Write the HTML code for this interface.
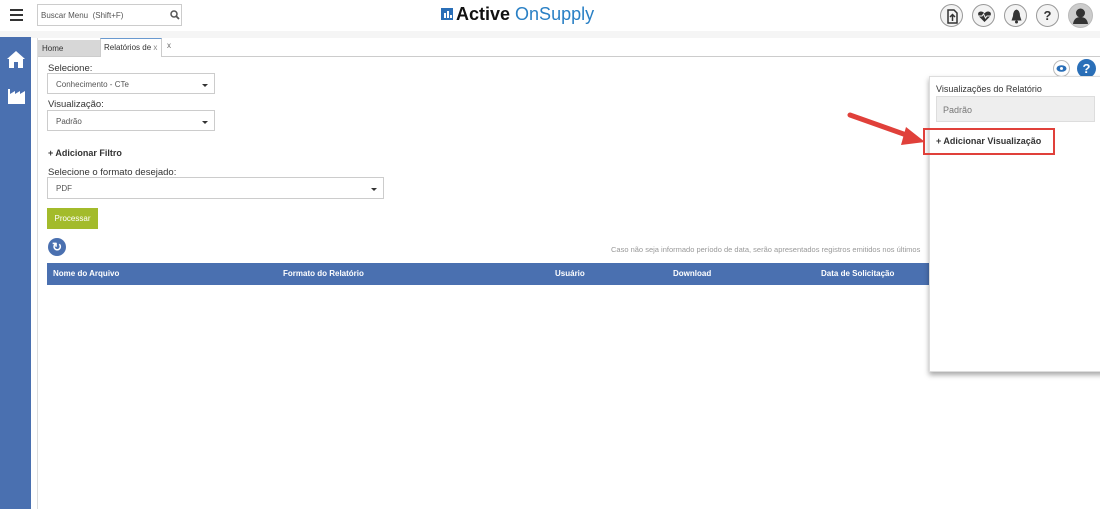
<!DOCTYPE html><html><head><style>
body{margin:0;width:1100px;height:509px;overflow:hidden;background:#fff;font-family:"Liberation Sans",sans-serif;position:relative;font-size:10px;color:#333}
.a{position:absolute}
.sel{position:absolute;border:1px solid #ccc;background:#fff;font-size:8px;color:#555;box-sizing:border-box;padding:6px 8px}
.sel:after{content:"";position:absolute;right:6px;top:10px;border:3px solid transparent;border-top:3px solid #333}
.lbl{position:absolute;font-size:9.5px;color:#333}
.circ{position:absolute;width:23px;height:23px;border-radius:50%;border:1px solid #999;background:#f3f3f3;box-sizing:border-box;font-weight:bold;font-size:13px;text-align:center;line-height:21px;color:#333}
.circ svg{position:absolute;left:0;top:0}
</style></head><body>
<div class="a" style="left:0;top:31px;width:1100px;height:7px;background:#f5f5f5"></div>
<div class="a" style="left:10px;top:9px;width:13px;height:2px;background:#333;box-shadow:0 5px 0 #333,0 10px 0 #333"></div>
<div class="a" style="left:37px;top:4px;width:145px;height:22px;border:1px solid #ccc;box-sizing:border-box;font-size:8px;padding:6px 3px;color:#555">Buscar Menu&nbsp; (Shift+F)</div>
<svg class="a" style="left:170px;top:10px" width="10" height="10"><circle cx="4" cy="4" r="3" fill="none" stroke="#555" stroke-width="1.5"/><line x1="6" y1="6" x2="9" y2="9" stroke="#555" stroke-width="1.8"/></svg>
<div class="a" style="left:441px;top:8px;width:12px;height:12px;background:#2a6fb8"></div>
<div class="a" style="left:444px;top:13px;width:1.5px;height:5px;background:#fff"></div><div class="a" style="left:447px;top:11px;width:1.5px;height:7px;background:#fff"></div><div class="a" style="left:450px;top:15px;width:1.5px;height:3px;background:#fff"></div>
<div class="a" style="left:456px;top:4px;font-size:18px;white-space:nowrap"><b style="color:#111">Active</b> <span style="color:#2a80c5">OnSupply</span></div>
<div class="circ" style="left:940px;top:4px"><svg width="23" height="23"><path d="M7 5h6l3 3v10H7Z" fill="none" stroke="#333" stroke-width="1.5"/><path d="M11.5 16v-6M9 12l2.5-2.5L14 12" fill="none" stroke="#333" stroke-width="1.5"/></svg></div>
<div class="circ" style="left:972px;top:4px"><svg width="23" height="23"><path d="M11.5 17 L5.5 11 Q4 7 7.5 6.5 Q10 6.3 11.5 8.5 Q13 6.3 15.5 6.5 Q19 7 17.5 11Z" fill="#333"/><path d="M5 11h4l1.5-2 2 4 1.5-2h4" fill="none" stroke="#f3f3f3" stroke-width="1"/></svg></div>
<div class="circ" style="left:1004px;top:4px"><svg width="23" height="23"><path d="M11.5 4.5 Q8 5.5 8 11 L6.5 15.5 H16.5 L15 11 Q15 5.5 11.5 4.5Z" fill="#333"/><circle cx="11.5" cy="17" r="1.5" fill="#333"/></svg></div>
<div class="circ" style="left:1036px;top:4px">?</div>
<div class="circ" style="left:1068px;top:3px;width:25px;height:25px;background:#ccc;border-color:#bbb"><svg width="23" height="23"><circle cx="11.5" cy="9" r="4.5" fill="#333"/><path d="M4 20 Q5 13 11.5 13 Q18 13 19 20Z" fill="#333"/></svg></div>
<div class="a" style="left:0;top:37px;width:31px;height:472px;background:#4a70b0"></div>
<svg class="a" style="left:6px;top:49px" width="20" height="20"><path d="M1 10 L10 2 L19 10 L17 10 L17 19 L3 19 L3 10Z" fill="#fff"/><rect x="8" y="13" width="4" height="6" fill="#4a70b0"/></svg>
<svg class="a" style="left:7px;top:87px" width="19" height="18"><path d="M1 2h2v5l5-3v3l5-3v3l5-3v13H1Z" fill="#fff"/></svg>
<div class="a" style="left:37px;top:38px;width:1px;height:471px;background:#ddd"></div>
<div class="a" style="left:38px;top:56px;width:1062px;height:1px;background:#ccc"></div>
<div class="a" style="left:38px;top:40px;width:62px;height:16px;background:#d7d7d7;font-size:8px;padding:4px 4px;box-sizing:border-box">Home</div>
<div class="a" style="left:100px;top:38px;width:62px;height:19px;background:#fff;border:1px solid #ccc;border-top:1px solid #6a9ad0;border-bottom:none;box-sizing:border-box;font-size:8px;padding:4px 3px">Relatórios de <span style="color:#888">x</span></div>
<div class="a" style="left:167px;top:41px;font-size:8px;color:#666">x</div>
<div class="lbl" style="left:48px;top:63px">Selecione:</div>
<div class="sel" style="left:47px;top:73px;width:168px;height:21px">Conhecimento - CTe</div>
<div class="lbl" style="left:48px;top:99px">Visualização:</div>
<div class="sel" style="left:47px;top:110px;width:168px;height:21px">Padrão</div>
<div class="lbl" style="left:48px;top:148px;font-weight:bold;font-size:9px">+ Adicionar Filtro</div>
<div class="lbl" style="left:48px;top:167px">Selecione o formato desejado:</div>
<div class="sel" style="left:47px;top:177px;width:337px;height:22px">PDF</div>
<div class="a" style="left:47px;top:208px;width:51px;height:21px;background:#a3bb2b;color:#fff;font-size:8px;text-align:center;line-height:21px">Processar</div>
<div class="a" style="left:48px;top:238px;width:18px;height:18px;border-radius:50%;background:#4a70b0;color:#fff;font-size:12px;font-weight:bold;text-align:center;line-height:18px">↻</div>
<div class="a" style="left:611px;top:245px;font-size:7.5px;color:#999;white-space:nowrap">Caso não seja informado período de data, serão apresentados registros emitidos nos últimos</div>
<div class="a" style="left:47px;top:263px;width:883px;height:22px;background:#4a70b0"></div>
<div class="a" style="left:53px;top:269px;font-size:8px;color:#fff;font-weight:bold">Nome do Arquivo</div>
<div class="a" style="left:283px;top:269px;font-size:8px;color:#fff;font-weight:bold">Formato do Relatório</div>
<div class="a" style="left:555px;top:269px;font-size:8px;color:#fff;font-weight:bold">Usuário</div>
<div class="a" style="left:673px;top:269px;font-size:8px;color:#fff;font-weight:bold">Download</div>
<div class="a" style="left:821px;top:269px;font-size:8px;color:#fff;font-weight:bold">Data de Solicitação</div>
<div class="a" style="left:1053px;top:60px;width:17px;height:17px;border-radius:50%;border:1px solid #bbb;box-sizing:border-box;background:#fff"><svg width="15" height="15"><ellipse cx="7.5" cy="7.5" rx="5" ry="3.3" fill="#2a6fb8"/><circle cx="7.5" cy="7.5" r="1.5" fill="#fff"/></svg></div>
<div class="a" style="left:1077px;top:59px;width:19px;height:19px;border-radius:50%;background:#2a6fb8;color:#fff;font-weight:bold;font-size:13px;text-align:center;line-height:19px">?</div>
<div class="a" style="left:929px;top:76px;width:180px;height:294px;background:#fff;border:1px solid #ddd;box-shadow:0 3px 5px rgba(0,0,0,.35)"></div>
<div class="a" style="left:936px;top:84px;font-size:9px;color:#333">Visualizações do Relatório</div>
<div class="a" style="left:936px;top:96px;width:159px;height:26px;background:#eee;border:1px solid #ddd;font-size:9px;color:#777;padding:8px 6px;box-sizing:border-box">Padrão</div>
<div class="a" style="left:923px;top:128px;width:132px;height:27px;border:2px solid #e0403a;box-sizing:border-box"></div>
<div class="a" style="left:936px;top:136px;font-size:9px;font-weight:bold;color:#333">+ Adicionar Visualização</div>
<svg class="a" style="left:840px;top:105px" width="90" height="50"><line x1="10" y1="10" x2="72" y2="32" stroke="#e0403a" stroke-width="5" stroke-linecap="round"/><path d="M85 37 L66 22 L61 40Z" fill="#e0403a"/></svg>
</body></html>
